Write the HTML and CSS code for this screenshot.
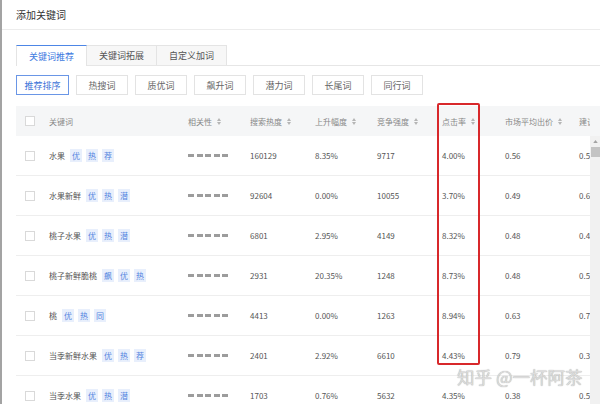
FILE: index.html
```html
<!DOCTYPE html>
<html lang="zh-CN">
<head>
<meta charset="utf-8">
<title>添加关键词</title>
<link rel="stylesheet" href="styles.css">
</head>
<body>
<div class="page">
  <div class="topbar"><span class="title">添加关键词</span></div>
  <div class="content">
    <div class="tabs">
      <div class="tab active">关键词推荐</div>
      <div class="tab">关键词拓展</div>
      <div class="tab">自定义加词</div>
    </div>
    <div class="filters">
      <div class="fbtn active">推荐排序</div>
      <div class="fbtn">热搜词</div>
      <div class="fbtn">质优词</div>
      <div class="fbtn">飙升词</div>
      <div class="fbtn">潜力词</div>
      <div class="fbtn">长尾词</div>
      <div class="fbtn">同行词</div>
    </div>
    <div class="table">
      <div class="thead-wrap">
        <div class="thead grid">
          <div class="cell cb"><span class="box"></span></div>
          <div class="cell">关键词</div>
          <div class="cell">相关性<svg class="sort" viewBox="0 0 4 7"><path d="M0 3L2 0L4 3Z M0 4L2 7L4 4Z"/></svg></div>
          <div class="cell">搜索热度<svg class="sort" viewBox="0 0 4 7"><path d="M0 3L2 0L4 3Z M0 4L2 7L4 4Z"/></svg></div>
          <div class="cell">上升幅度<svg class="sort" viewBox="0 0 4 7"><path d="M0 3L2 0L4 3Z M0 4L2 7L4 4Z"/></svg></div>
          <div class="cell">竞争强度<svg class="sort" viewBox="0 0 4 7"><path d="M0 3L2 0L4 3Z M0 4L2 7L4 4Z"/></svg></div>
          <div class="cell">点击率<svg class="sort" viewBox="0 0 4 7"><path d="M0 3L2 0L4 3Z M0 4L2 7L4 4Z"/></svg></div>
          <div class="cell">市场平均出价<svg class="sort" viewBox="0 0 4 7"><path d="M0 3L2 0L4 3Z M0 4L2 7L4 4Z"/></svg></div>
          <div class="cell">建议出价</div>
        </div>
        <div class="thead-fill"></div>
      </div>
      <div class="body-wrap">
        <div class="tbody">
          <div class="row grid">
            <div class="cell cb"><span class="box"></span></div>
            <div class="cell kw">水果<span class="tag">优</span><span class="tag">热</span><span class="tag">荐</span></div>
            <div class="cell"><span class="bars"><i></i><i></i><i></i><i></i><i></i></span></div>
            <div class="cell">160129</div><div class="cell">8.35%</div><div class="cell">9717</div><div class="cell">4.00%</div><div class="cell">0.56</div><div class="cell">0.55</div>
          </div>
          <div class="row grid">
            <div class="cell cb"><span class="box"></span></div>
            <div class="cell kw">水果新鲜<span class="tag">优</span><span class="tag">热</span><span class="tag">潜</span></div>
            <div class="cell"><span class="bars"><i></i><i></i><i></i><i></i><i></i></span></div>
            <div class="cell">92604</div><div class="cell">0.00%</div><div class="cell">10055</div><div class="cell">3.70%</div><div class="cell">0.49</div><div class="cell">0.60</div>
          </div>
          <div class="row grid">
            <div class="cell cb"><span class="box"></span></div>
            <div class="cell kw">桃子水果<span class="tag">优</span><span class="tag">热</span><span class="tag">潜</span></div>
            <div class="cell"><span class="bars"><i></i><i></i><i></i><i></i><i></i></span></div>
            <div class="cell">6801</div><div class="cell">2.95%</div><div class="cell">4149</div><div class="cell">8.32%</div><div class="cell">0.48</div><div class="cell">0.44</div>
          </div>
          <div class="row grid">
            <div class="cell cb"><span class="box"></span></div>
            <div class="cell kw">桃子新鲜脆桃<span class="tag">飙</span><span class="tag">优</span><span class="tag">热</span></div>
            <div class="cell"><span class="bars"><i></i><i></i><i></i><i></i><i></i></span></div>
            <div class="cell">2931</div><div class="cell">20.35%</div><div class="cell">1248</div><div class="cell">8.73%</div><div class="cell">0.48</div><div class="cell">0.55</div>
          </div>
          <div class="row grid">
            <div class="cell cb"><span class="box"></span></div>
            <div class="cell kw">桃<span class="tag">优</span><span class="tag">热</span><span class="tag">同</span></div>
            <div class="cell"><span class="bars"><i></i><i></i><i></i><i></i><i></i></span></div>
            <div class="cell">4413</div><div class="cell">0.00%</div><div class="cell">1263</div><div class="cell">8.94%</div><div class="cell">0.63</div><div class="cell">0.72</div>
          </div>
          <div class="row grid">
            <div class="cell cb"><span class="box"></span></div>
            <div class="cell kw">当季新鲜水果<span class="tag">优</span><span class="tag">热</span><span class="tag">荐</span></div>
            <div class="cell"><span class="bars"><i></i><i></i><i></i><i></i><i></i></span></div>
            <div class="cell">2401</div><div class="cell">2.92%</div><div class="cell">6610</div><div class="cell">4.43%</div><div class="cell">0.79</div><div class="cell">0.33</div>
          </div>
          <div class="row grid">
            <div class="cell cb"><span class="box"></span></div>
            <div class="cell kw">当季水果<span class="tag">优</span><span class="tag">热</span><span class="tag">潜</span></div>
            <div class="cell"><span class="bars"><i></i><i></i><i></i><i></i><i></i></span></div>
            <div class="cell">1703</div><div class="cell">0.76%</div><div class="cell">5632</div><div class="cell">4.35%</div><div class="cell">0.38</div><div class="cell">0.55</div>
          </div>
        </div>
        <div class="scrollbar">
          <svg class="arrow" viewBox="0 0 6 4"><path d="M0 4L3 0L6 4Z"/></svg>
          <div class="thumb"></div>
        </div>
      </div>
    </div>
  </div>
  <div class="redbox"></div>
  <div class="watermark">知乎 @一杯阿茶</div>
</div>
</body>
</html>
```
FILE: styles.css
```css
html, body {
  margin: 0;
  padding: 0;
  background: #fff;
  width: 600px;
  height: 404px;
  overflow: hidden;
}
body {
  font-family: "Noto Sans CJK SC", "Noto Sans", sans-serif;
  color: #555;
}
.page {
  position: relative;
  width: 600px;
  height: 404px;
  box-sizing: border-box;
  border-left: 2px solid #a3a3a3;
  overflow: hidden;
}
.topbar {
  height: 29px;
  border-bottom: 1px solid #ececec;
  display: flex;
  align-items: center;
  padding-left: 14px;
  font-size: 10px;
  color: #333;
}
.content {
  padding-left: 14px;
}
.tabs {
  margin-top: 15px;
  height: 20px;
  display: flex;
  border-bottom: 1px solid #e6e6e6;
}
.tab {
  width: 71px;
  height: 20px;
  box-sizing: border-box;
  border: 1px solid #e4e4e4;
  border-bottom: none;
  background: #f7f7f7;
  font-size: 9px;
  color: #555;
  display: flex;
  align-items: center;
  justify-content: center;
}
.tab + .tab {
  margin-left: -1px;
}
.tab.active {
  background: #fff;
  color: #3f7bdf;
  border-top: 1px solid #4d86e6;
  height: 21px;
  position: relative;
  z-index: 1;
}
.filters {
  margin-top: 9px;
  display: flex;
  gap: 7px;
}
.fbtn {
  width: 52px;
  height: 20px;
  box-sizing: border-box;
  border: 1px solid #e3e3e3;
  font-size: 9px;
  color: #666;
  display: flex;
  align-items: center;
  justify-content: center;
}
.fbtn.active {
  width: 53px;
  border-color: #6a96e6;
  color: #3f75d8;
}
.table {
  margin-top: 11px;
}
.grid {
  display: grid;
  grid-template-columns: 33px 139px 62px 65px 62px 65px 63px 74px 60px;
  align-items: center;
  font-size: 8px;
}
.thead-wrap {
  display: flex;
  height: 30px;
  background: #f5f6f7;
}
.thead {
  height: 30px;
  width: 574px;
  overflow: hidden;
  color: #888;
}
.thead-fill {
  width: 10px;
}
.cell {
  display: flex;
  align-items: center;
  white-space: nowrap;
}
.cb {
  padding-left: 9px;
}
.box {
  display: block;
  width: 10px;
  height: 10px;
  box-sizing: border-box;
  border: 1px solid #d9d9d9;
  background: #fff;
}
.sort {
  width: 4px;
  height: 7px;
  margin-left: 5px;
  fill: #b5b5b5;
}
.body-wrap {
  display: flex;
  height: 268px;
  overflow: hidden;
}
.tbody {
  width: 574px;
  overflow: hidden;
}
.row {
  height: 40px;
  box-sizing: border-box;
  border-bottom: 1px solid #eeeeee;
  color: #555;
}
.tag {
  display: inline-flex;
  align-items: center;
  justify-content: center;
  width: 12px;
  height: 13px;
  margin-left: 4px;
  background: #e8effc;
  color: #5585e0;
  font-size: 8px;
}
.kw > .tag:nth-of-type(1) {
  margin-left: 5px;
}
.bars {
  display: flex;
  gap: 2.5px;
}
.bars i {
  display: block;
  width: 6px;
  height: 3px;
  background: #9c9c9c;
}
.scrollbar {
  width: 10px;
  height: 268px;
  background: #f1f1f1;
  display: flex;
  flex-direction: column;
  align-items: center;
}
.arrow {
  width: 5px;
  height: 3px;
  margin-top: 4px;
  fill: #a3a3a3;
}
.thumb {
  margin-top: 4px;
  width: 9px;
  height: 10px;
  background: #c3c3c3;
  align-self: flex-end;
}
.redbox {
  position: absolute;
  left: 435px;
  top: 103px;
  width: 43px;
  height: 262px;
  box-sizing: border-box;
  border: 2px solid #d8282b;
  border-radius: 2px;
  pointer-events: none;
}
.watermark {
  position: absolute;
  left: 455px;
  top: 365px;
  font-size: 17.5px;
  line-height: 24px;
  color: #dcdcdc;
  text-shadow: 0 0 1px rgba(0, 0, 0, 0.4);
  white-space: nowrap;
}
```
